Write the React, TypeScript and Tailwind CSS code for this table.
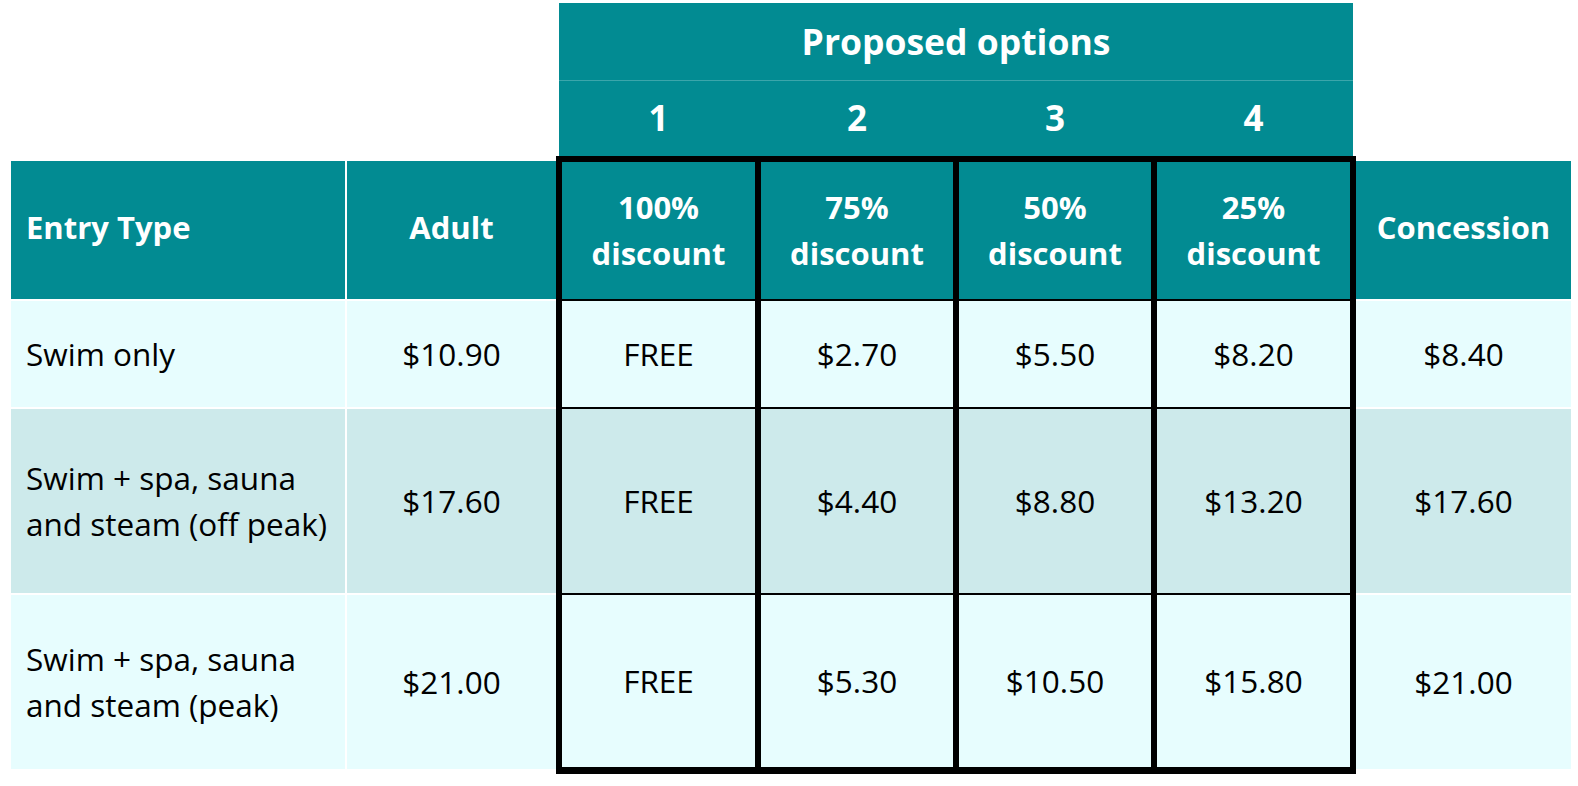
const font = { fontFamily: '"Open Sans", "Liberation Sans", sans-serif' };

type Row = {
  type: string[];
  adult: string;
  options: string[];
  concession: string;
  bg: string;
  outer: string;
  inner: string;
};

const rows: Row[] = [
  {
    type: ["Swim only"],
    adult: "$10.90",
    options: ["FREE", "$2.70", "$5.50", "$8.20"],
    concession: "$8.40",
    bg: "bg-[#e7fdfe]",
    outer: "h-[108px]",
    inner: "h-[108px]",
  },
  {
    type: ["Swim + spa, sauna", "and steam (off peak)"],
    adult: "$17.60",
    options: ["FREE", "$4.40", "$8.80", "$13.20"],
    concession: "$17.60",
    bg: "bg-[#cdeaeb]",
    outer: "h-[186px]",
    inner: "h-[186px]",
  },
  {
    type: ["Swim + spa, sauna", "and steam (peak)"],
    adult: "$21.00",
    options: ["FREE", "$5.30", "$10.50", "$15.80"],
    concession: "$21.00",
    bg: "bg-[#e7fdfe]",
    outer: "h-[176px]",
    inner: "h-[181px] border-b-[7px]",
  },
];

// widths of the four boxed option columns (incl. their left black border)
const boxWidths = ["w-[199px]", "w-[198px]", "w-[198px]", "w-[205px] border-r-[6px]"];
const numWidths = ["w-[199px]", "w-[198px]", "w-[198px]", "w-[199px]"];
const discounts = ["100%", "75%", "50%", "25%"];

const App = () => {
  return (
    <div className="bg-white w-[1578px] h-[786px] pl-[11px] pt-[3px] text-black" style={font}>
      {/* proposed options header */}
      <div className="flex">
        <div className="w-[548px] shrink-0" />
        <div className="w-[794px] bg-[#028b92] text-white font-bold">
          <div className="h-[78px] flex items-center justify-center text-[35.5px] border-b border-[#3ba6ab]">
            Proposed options
          </div>
          <div className="h-[75px] flex text-[35px]">
            {numWidths.map((w, i) => (
              <div key={i} className={`${w} flex items-center justify-center`}>
                {i + 1}
              </div>
            ))}
          </div>
        </div>
      </div>

      {/* column headers */}
      <div className="flex items-end text-[31px] font-bold text-white">
        <div className="w-[334px] h-[138px] bg-[#028b92] flex items-center pl-[15px] pb-[6px]">
          Entry Type
        </div>
        <div className="w-[211px] h-[138px] border-l-2 border-white bg-[#028b92] flex items-center justify-center pb-[6px]">
          Adult
        </div>
        {discounts.map((d, i) => (
          <div
            key={d}
            className={`${boxWidths[i]} h-[143px] border-l-[6px] border-t-[6px] border-black bg-[#028b92] leading-[46px] flex flex-col items-center justify-center pb-[2px]`}
          >
            <span>{d}</span>
            <span>discount</span>
          </div>
        ))}
        <div className="w-[215px] h-[138px] bg-[#028b92] flex items-center justify-center pb-[6px]">
          Concession
        </div>
      </div>

      {/* data rows */}
      {rows.map((r) => (
        <div key={r.adult + r.concession} className="flex items-start text-[31.5px] leading-[46px]">
          <div className={`w-[334px] ${r.outer} ${r.bg} border-t-2 border-white flex flex-col justify-center pl-[15px]`}>
            {r.type.map((t) => (
              <span key={t}>{t}</span>
            ))}
          </div>
          <div className={`w-[211px] ${r.outer} ${r.bg} border-t-2 border-l-2 border-white flex items-center justify-center`}>
            {r.adult}
          </div>
          {r.options.map((o, i) => (
            <div
              key={i}
              className={`${boxWidths[i]} ${r.inner} ${r.bg} border-l-[6px] border-t-2 border-black flex items-center justify-center`}
            >
              {o}
            </div>
          ))}
          <div className={`w-[215px] ${r.outer} ${r.bg} border-t-2 border-white flex items-center justify-center`}>
            {r.concession}
          </div>
        </div>
      ))}
    </div>
  );
};

export default App;
